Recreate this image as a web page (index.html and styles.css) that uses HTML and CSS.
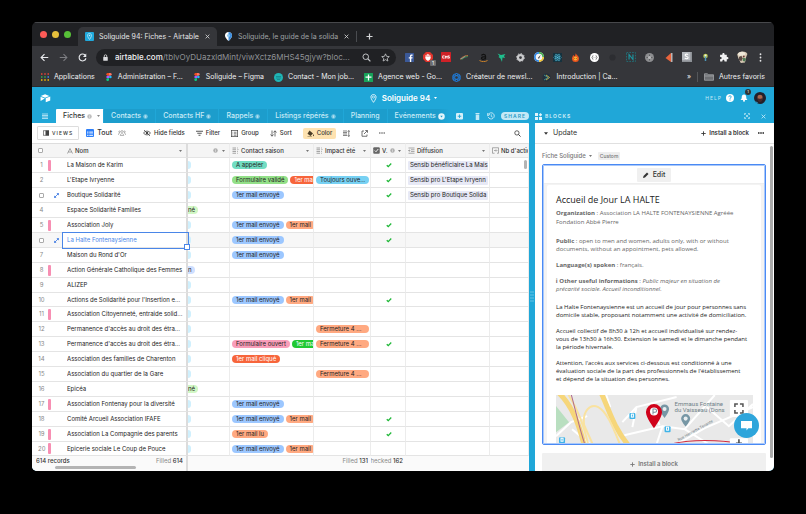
FILE: index.html
```html
<!DOCTYPE html>
<html lang="fr">
<head>
	<meta charset="UTF-8">
	<title>Soliguide 94: Fiches - Airtable</title>
	<link rel="stylesheet" href="styles.css">
</head>
<body>

	<!-- icons used more than once -->
	<svg class="sprite">
		<symbol id="i-info" viewBox="0 0 10 10"><circle cx="5" cy="5" r="4.5" fill="currentColor" opacity=".55"/><path d="M5 4.4v3M5 2.4v1" stroke="#fff" stroke-width="1.1"/></symbol>
		<symbol id="i-pin" viewBox="0 0 10 14"><path d="M5 .8C2.6.8 1 2.500 1 4.800c0 3 4 8.200 4 8.200s4-5.200 4-8.200C9 2.500 7.400.8 5 .8z" fill="none" stroke="currentColor" stroke-width="1.3"/><circle cx="5" cy="4.800" r="1.700" fill="none" stroke="currentColor"/></symbol>
		<symbol id="i-figma" viewBox="0 0 8 12"><path d="M4 0H2a2 2 0 0 0 0 4h2z" fill="#f24e1e"/><path d="M4 0h2a2 2 0 0 1 0 4H4z" fill="#ff7262"/><path d="M4 4H2a2 2 0 0 0 0 4h2z" fill="#a259ff"/><circle cx="6" cy="6" r="2" fill="#1abcfe"/><path d="M4 8H2a2 2 0 1 0 2 2z" fill="#0acf83"/></symbol>
		<symbol id="i-x" viewBox="0 0 8 8"><path d="M1 1l6 6M7 1L1 7" stroke="currentColor" stroke-width="1.300"/></symbol>
		<symbol id="i-plus" viewBox="0 0 8 8"><path d="M4 .5v7M.5 4h7" stroke="currentColor" stroke-width="1.400"/></symbol>
		<symbol id="i-multi" viewBox="0 0 14 14"><path d="M1 2h7M1 5.500h7M1 9h7M1 12.500h7M10 2h1.500M10 5.500h1.500M10 9h1.500M10 12.500h1.500M12.500 4l.8 1" stroke="currentColor" stroke-width="1.300"/></symbol>
		<symbol id="i-search" viewBox="0 0 12 12"><circle cx="5" cy="5" r="3.700" fill="none" stroke="currentColor" stroke-width="1.300"/><path d="M7.700 7.700l3.500 3.500" stroke="currentColor" stroke-width="1.600"/></symbol>
		<symbol id="i-down" viewBox="0 0 6 4"><path d="M0 0h6L3 4z" fill="currentColor"/></symbol>
		<symbol id="i-expand" viewBox="0 0 10 10"><path d="M1 9l8-8" stroke="currentColor" stroke-width="1.500"/><path d="M5 .5h4.500V5zM.5 5v4.500H5z" fill="currentColor"/></symbol>
		<symbol id="i-check" viewBox="0 0 12 10"><path d="M1.500 5.500l3 2.700L10.500 2" fill="none" stroke="currentColor" stroke-width="2.600"/></symbol>
	</svg>

	<div id="window">
		<div class="tabStrip">
			<div class="lights"><span class="red"></span><span class="yellow"></span><span class="green"></span></div>
			<div class="chromeTab active">
				<svg class="s9" viewBox="0 0 18 18"><rect width="18" height="18" rx="2" fill="#20a9dc"/><path d="M9 3C6.500 3 5 4.800 5 7c0 3 4 8 4 8s4-5 4-8c0-2.200-1.500-4-4-4z" fill="none" stroke="#c8ecfa" stroke-width="1.500"/><circle cx="9" cy="7" r="1.500" fill="#c8ecfa"/></svg>
				<span>Soliguide 94: Fiches - Airtable</span>
				<button class="plain" aria-label="Fermer"><svg class="s5"><use href="#i-x"/></svg></button>
			</div>
			<div class="chromeTab">
				<svg class="s9" viewBox="0 0 18 18"><path d="M9 0C5 0 2 3 2 7c0 5 7 11 7 11s7-6 7-11c0-4-3-7-7-7z" fill="#fff"/><path d="M9 0c4 0 7 3 7 7 0 5-7 11-7 11z" fill="#3d8fe0"/><circle cx="9" cy="7" r="3" fill="#8ccaf5"/></svg>
				<span>Soliguide, le guide de la solida</span>
				<button class="plain" aria-label="Fermer"><svg class="s5"><use href="#i-x"/></svg></button>
			</div>
			<button class="plain newTab" aria-label="Nouvel onglet"><svg class="s7"><use href="#i-plus"/></svg></button>
		</div>

		<div class="navBar">
			<div class="navButtons">
				<button class="plain" aria-label="Retour"><svg class="s9" viewBox="0 0 12 12"><path d="M11 6H2M6 1.500L1.500 6 6 10.500" fill="none" stroke="#e8eaed" stroke-width="1.500"/></svg></button>
				<button class="plain" aria-label="Suivant"><svg class="s9" viewBox="0 0 12 12"><path d="M1 6h9M6 1.500L10.500 6 6 10.500" fill="none" stroke="#7d7e82" stroke-width="1.400"/></svg></button>
				<button class="plain" aria-label="Actualiser"><svg class="s9" viewBox="0 0 12 12"><path d="M10 3.500A4.600 4.600 0 1 0 10.600 7" fill="none" stroke="#e8eaed" stroke-width="1.500"/><path d="M11 .8v4.400H6.600z" fill="#e8eaed"/></svg></button>
			</div>
			<div class="urlBar">
				<svg class="s7" viewBox="0 0 12 14"><rect x="1.500" y="6" width="9" height="7.500" rx="1" fill="#dcdde0"/><path d="M3.500 6V4a2.500 2.500 0 0 1 5 0v2" fill="none" stroke="#dcdde0" stroke-width="1.600"/></svg>
				<span class="url"><b>airtable.com</b>/tblvOyDUazxldMint/viwXctz6MHS45gjyw?bloc...</span>
				<svg class="s9"><use href="#i-search"/></svg>
				<svg class="s9" viewBox="0 0 14 14"><path d="M7 1.300l1.700 3.900 4.200.4-3.200 2.800 1 4.100L7 10.300l-3.700 2.200 1-4.100L1.100 5.600l4.200-.4z" fill="none" stroke="currentColor" stroke-width="1.300"/></svg>
			</div>
			<div class="extensions">
				<span><svg class="s9" viewBox="0 0 18 18"><rect width="18" height="18" rx="1" fill="#3b5998"/><path d="M12.500 18v-7h2.300l.4-2.700h-2.700V6.700c0-.8.3-1.300 1.400-1.300h1.300V3c-3.600-.6-5.400.7-5.400 3.300v2H7.500V11h2.300v7z" fill="#fff"/></svg></span>
				<span class="blocker"><svg class="s10" viewBox="0 0 18 18"><path d="M5.300 0h7.400L18 5.300v7.400L12.700 18H5.300L0 12.700V5.300z" fill="#e0332b"/><path d="M5.500 9V5.500M7.800 8V3.500M10.200 8V4M12.500 9V5.500M5 9h8c0 4-1.500 6-4 6s-4-2-4-6z" stroke="#fff" stroke-width="1.600" fill="#fff"/></svg><i>1</i></span>
				<span><svg class="s10" viewBox="0 0 18 18"><rect width="18" height="18" rx="1" fill="#cf2127"/><path d="M6.500 7H3v4h3.500M8 11.800V7l1.500 2.500L11 7v4.800M15.500 7h-2.800v2h2.500v2h-2.800" stroke="#fff" stroke-width="1.500" fill="none"/></svg></span>
				<span><svg class="s9" viewBox="0 0 18 18"><path d="M1 13c3-6 8-7 15-8" fill="none" stroke="#e8833a" stroke-width="1.500"/><path d="M3 14c3-5 7-6 13-7" fill="none" stroke="#3fa55b" stroke-width="1.500"/><path d="M1 11l5-1 5-4" stroke="#b9c4ca" stroke-width="1.200" fill="none"/></svg></span>
				<span><svg class="s9" viewBox="0 0 18 18"><path d="M5 5c1-3 8-3 8 1v7M13 7c-4 0-8 .5-8 3.500s5.500 3 8-.5" fill="none" stroke="#111" stroke-width="2.500"/><path d="M1 15c5 3 11 3 16 0" fill="none" stroke="#e08c28" stroke-width="1.700"/></svg></span>
				<span><svg class="s9" viewBox="0 0 18 18"><path d="M1 1l7 3 9-2-3 4 2 4-5-1-1 9-3-7-4-3 2-2z" fill="#1fbf8d"/></svg></span>
				<span><svg class="s9" viewBox="0 0 18 18"><circle cx="9" cy="9" r="5" fill="none" stroke="#c9cacc" stroke-width="4.500"/><circle cx="9" cy="9" r="7.800" fill="none" stroke="#c9cacc" stroke-width="2" stroke-dasharray="3 3"/></svg></span>
				<span><svg class="s10" viewBox="0 0 18 18"><circle cx="9" cy="9" r="9" fill="#f5f5f5"/><path d="M9 1.500A7.500 7.500 0 0 1 16.500 9" fill="none" stroke="#46b14f" stroke-width="3"/><path d="M16.500 9A7.500 7.500 0 0 1 9 16.500" fill="none" stroke="#f4c430" stroke-width="3"/><path d="M9 16.500A7.500 7.500 0 0 1 9 1.500" fill="none" stroke="#2f86e5" stroke-width="3"/><path d="M7 11l5-6-3 7z" fill="#333"/></svg></span>
				<span><svg class="s9" viewBox="0 0 18 18"><rect width="18" height="18" fill="#15323e"/><g fill="none" stroke="#57c7e6" stroke-width="1"><ellipse cx="9" cy="9" rx="7.500" ry="3"/><ellipse cx="9" cy="9" rx="7.500" ry="3" transform="rotate(60 9 9)"/><ellipse cx="9" cy="9" rx="7.500" ry="3" transform="rotate(120 9 9)"/></g><circle cx="9" cy="9" r="1.500" fill="#57c7e6"/></svg></span>
				<span><svg class="s9" viewBox="0 0 18 18"><path d="M9 0c1 4 7 5 7 11a7 7 0 0 1-14 0c0-3 2-4 2-7 2 1 3 2 3 3 2-2 2-4 2-7z" fill="#e8541f"/><circle cx="9" cy="11" r="3.800" fill="#f9b233"/><path d="M7 11h1.200M10 11h1.200" stroke="#7d2b10" stroke-width="1.800"/></svg></span>
				<span><svg class="s9" viewBox="0 0 18 18"><circle cx="9" cy="9" r="9" fill="#fff"/><path d="M6.500 5C4.500 5 6 8 4 9c2 1 .5 4 2.500 4M11.500 5c2 0 .5 3 2.500 4-2 1-.5 4-2.500 4M7.500 9h.8M9.800 9h.8" fill="none" stroke="#444" stroke-width="1.400"/></svg></span>
				<span><svg class="s7" viewBox="0 0 18 18"><circle cx="9" cy="9" r="8" fill="#2c2d31"/></svg></span>
				<span><svg class="s10" viewBox="0 0 18 18"><rect x="1" y="1" width="16" height="16" fill="none" stroke="#1d7c86" stroke-width="1.400" stroke-dasharray="3 2"/><path d="M5.500 13.500v-9l7 9v-9" fill="none" stroke="#1c98a3" stroke-width="2"/></svg></span>
				<span><svg class="s9" viewBox="0 0 18 18"><circle cx="9" cy="9" r="9" fill="#8d8e90"/><path d="M9 3v12M3 9h12" stroke="#4c4d50" stroke-width="1.500"/><circle cx="9" cy="9" r="3" fill="#b7b8ba"/></svg></span>
				<span><svg class="s9" viewBox="0 0 18 18"><path d="M14 0v18L3 10z" fill="#e8643c"/><path d="M14 0h3v18h-3z" fill="#b9b4b4"/></svg></span>
				<span><svg class="s10" viewBox="0 0 18 18"><rect width="18" height="18" fill="#8d9196"/><rect width="15" height="15" fill="#b6babf"/><path d="M11 4.500c-3-1.500-6 0-5 2s5 1 5 3.500-4 2.500-6 1" fill="none" stroke="#fff" stroke-width="2"/></svg></span>
				<span><svg class="s9" viewBox="0 0 18 18"><circle cx="9" cy="6" r="4.500" fill="#b9c94a"/><path d="M9 6v10" stroke="#4f97b8" stroke-width="3"/><circle cx="9" cy="5" r="2" fill="#eee"/></svg></span>
				<span><svg class="s10" viewBox="0 0 18 18"><path d="M2 5h4c-1-4 5-4 4 0h4v4c4-1 4 5 0 4v4h-4c0-4-4-4-4 0H2v-4c4 0 4-4 0-4z" fill="#f1f1f2"/></svg></span>
				<span><svg class="s12" viewBox="0 0 20 20"><path d="M2 6c2-6 14-7 17-1l-2 5-2 9-7 1-4-8z" fill="#d7c9b4"/><path d="M3 5c3-5 11-5 13 0l-3 3H5z" fill="#efe8da"/><path d="M5 10l4-2 2 4-2 5-4-2z" fill="#5b4a44"/><path d="M12 11l5 2-3 5-3-2z" fill="#4d7a54"/><circle cx="13" cy="9" r="1.500" fill="#6a3830"/></svg></span>
				<span><svg class="s9" viewBox="0 0 18 18"><g fill="#e4e5e7"><circle cx="9" cy="2.500" r="1.800"/><circle cx="9" cy="9" r="1.800"/><circle cx="9" cy="15.500" r="1.800"/></g></svg></span>
			</div>
		</div>

		<nav class="bookmarks">
			<a href="#"><svg class="s8" viewBox="0 0 16 16"><g stroke-width="3" stroke-dasharray="3 3.500"><path d="M0 2h16" stroke="#ea4335"/><path d="M0 8h10" stroke="#34a853"/><path d="M13 8h3" stroke="#4285f4"/><path d="M0 14h16" stroke="#fbbc05"/></g></svg>Applications</a>
			<a href="#"><svg class="s8"><use href="#i-figma"/></svg>Administration – F...</a>
			<a href="#"><svg class="s8"><use href="#i-figma"/></svg>Soliguide – Figma</a>
			<a href="#"><svg class="s9" viewBox="0 0 18 18"><circle cx="9" cy="9" r="9" fill="#1fb5b5"/><path d="M4 7h10M4 10h10M6 13h6" stroke="#117d85" stroke-width="1.400"/></svg>Contact - Mon job...</a>
			<a href="#"><svg class="s9" viewBox="0 0 18 18"><rect width="18" height="18" rx="1" fill="#17a35a"/><path d="M9 3v12M3 8h12" stroke="#fff" stroke-width="2.500"/></svg>Agence web - Go...</a>
			<a href="#"><svg class="s9" viewBox="0 0 18 18"><g fill="none" stroke="#1f7fe0" stroke-width="1.500"><circle cx="9" cy="9" r="8"/><ellipse cx="9" cy="9" rx="8" ry="3.500" transform="rotate(30 9 9)"/><ellipse cx="9" cy="9" rx="8" ry="3.500" transform="rotate(90 9 9)"/><ellipse cx="9" cy="9" rx="8" ry="3.500" transform="rotate(150 9 9)"/></g></svg>Créateur de newsl...</a>
			<a href="#"><svg class="s9" viewBox="0 0 18 18"><circle cx="9" cy="9" r="8" fill="#23313f"/><path d="M4 4l8 5-8 5" fill="none" stroke="#4aa3a0" stroke-width="1.600"/><path d="M8 4l7 5-7 5" fill="none" stroke="#e2c94c" stroke-width="1.600"/></svg>Introduction | Ca...</a>
			<span class="more">»</span>
			<a href="#" class="others"><svg class="s10" viewBox="0 0 20 16"><path d="M1 14.500V1.500h6l2 2h10v11zM1 6h18" fill="#6d6f73" stroke="#a6a8ab" stroke-width="1.500"/></svg>Autres favoris</a>
		</nav>

		<div class="app">
			<header class="baseHeader">
				<svg class="logo" viewBox="0 0 24 20"><path d="M11 .5L1.500 4.300l9.600 4 9.500-4z" fill="#fff"/><path d="M12.500 9.500v9l10-4V5.600z" fill="#fff"/><path d="M10.500 10L1 6v9.500z" fill="#fff"/></svg>
				<h1><svg class="s9"><use href="#i-pin"/></svg>Soliguide 94<svg class="caret"><use href="#i-down"/></svg></h1>
				<div class="account">
					<span class="help">HELP</span>
					<svg class="s8" viewBox="0 0 16 16"><circle cx="8" cy="8" r="8" fill="#fff"/><path d="M5.500 6.300c0-3.500 5-3.300 5-.5C10.500 7.500 8 7.500 8 9.500M8 11v2" fill="none" stroke="#20a7d8" stroke-width="1.900"/></svg>
					<span class="bell"><svg class="s8" viewBox="0 0 16 16"><path d="M8 1c-3 0-4.500 2-4.500 5S3 10 1 12h14c-2-2-2.500-3-2.500-6S11 1 8 1z" fill="#fff"/><circle cx="8" cy="13.500" r="2" fill="#fff"/></svg><i>1</i></span>
					<svg class="s12" viewBox="0 0 24 24"><circle cx="12" cy="12" r="12" fill="#23202a"/><path d="M7 10c0-6 10-6 10 0s-2 8-5 8-5-3-5-8z" fill="#a9674e"/><path d="M7 12c2 2 8 2 10 0 0 6-2 8-5 8s-5-3-5-8z" fill="#47292a"/><path d="M2 18l6 3-2 2z" fill="#2f9ccc"/></svg>
				</div>
			</header>

			<div class="tableTabs">
				<svg class="menu" viewBox="0 0 12 12"><path d="M0 2h12M0 5h12M0 8h12M0 11h12" stroke="#b6e3f4" stroke-width="1.800"/></svg>
				<a href="#" class="active">Fiches <svg class="s5"><use href="#i-info"/></svg><svg class="caret"><use href="#i-down"/></svg></a>
				<a href="#">Contacts <svg class="s5"><use href="#i-info"/></svg></a>
				<a href="#">Contacts HF <svg class="s5"><use href="#i-info"/></svg></a>
				<a href="#">Rappels <svg class="s5"><use href="#i-info"/></svg></a>
				<a href="#">Listings répérés <svg class="s5"><use href="#i-info"/></svg></a>
				<a href="#">Planning</a>
				<a href="#" class="last">Evénements</a>
				<div class="tabTools">
					<svg class="s7" viewBox="0 0 14 14"><circle cx="7" cy="7" r="6.500" fill="#e3f5fb"/><path d="M4.500 5.500h5L7 9z" fill="#1b9dcb"/></svg>
					<svg class="s7 add" viewBox="0 0 14 14"><rect width="14" height="13" rx="2" fill="#d6f0f9"/><path d="M7 3v7M3.500 6.500h7" stroke="#20a7d8" stroke-width="1.800"/></svg>
					<svg class="s7" viewBox="0 0 14 14"><path d="M3 0h8v2H3zM3.500 3h7v11h-7z" fill="#c4e9f6"/></svg>
					<svg class="s8" viewBox="0 0 16 16"><path d="M3 4.500A6.200 6.200 0 1 1 2.500 10" fill="none" stroke="#d6f0f9" stroke-width="1.700"/><path d="M.5 3l1 5 4-3zM8.500 4.500V9l3 1.500" fill="none" stroke="#d6f0f9" stroke-width="1.500"/></svg>
					<button class="share">SHARE</button>
				</div>
				<div class="blocksTitle">
					<svg class="s7" viewBox="0 0 14 14"><path d="M0 0h6v6H0zM0 8h6v6H0zM8 8h6v6H8zM11 0l3.500 3.500L11 7 7.500 3.500z" fill="#e3f5fb"/></svg>
					<span>BLOCKS</span>
					<svg class="s6 full" viewBox="0 0 12 12"><path d="M1 4V1h3M8 1h3v3M11 8v3H8M4 11H1V8M3 3l6 6M9 3L3 9" fill="none" stroke="#d6f0f9" stroke-width="1.300"/></svg>
					<svg class="s5"><use href="#i-x"/></svg>
				</div>
			</div>

			<div class="main">
				<section class="gridPane">
					<div class="viewBar">
						<button class="views"><svg class="s6" viewBox="0 0 12 10"><rect x=".6" y=".6" width="10.800" height="8.800" fill="none" stroke="#444" stroke-width="1.200"/><path d="M5 0h7v10H5z" fill="#444"/></svg>VIEWS</button>
						<button class="viewName"><svg class="s8" viewBox="0 0 16 16"><rect width="16" height="16" rx="2" fill="#2d7ff9"/><path d="M2 5h3v2.500H2zM6.500 5H14v2.500H6.500zM2 9h3v1.500H2zM6.500 9H14v1.500H6.500zM2 12h3v2H2zM6.500 12H14v2H6.500z" fill="#cfe2ff"/></svg>Tout</button>
						<svg class="s8 people" viewBox="0 0 16 14"><g fill="none" stroke="#888" stroke-width="1.200"><circle cx="8" cy="4" r="2"/><circle cx="3" cy="4.500" r="1.500"/><circle cx="13" cy="4.500" r="1.500"/><path d="M4.500 12c0-5 7-5 7 0zM.6 11c0-3 1.500-4 3-3.500M15.400 11c0-3-1.500-4-3-3.500"/></g></svg>
						<button class="hide"><svg class="s8" viewBox="0 0 16 14"><path d="M1 7c3-5 11-5 14 0-3 5-11 5-14 0zM2 1l12 12" fill="none" stroke="#444" stroke-width="1.500"/><circle cx="8" cy="7" r="2.500" fill="#444"/></svg>Hide fields</button>
						<button><svg class="s7" viewBox="0 0 14 12"><path d="M0 1.500h14M2.500 5.500h9M5 9.500h4" stroke="#444" stroke-width="1.800"/></svg>Filter</button>
						<button><svg class="s7" viewBox="0 0 14 14"><rect x=".7" y=".7" width="12.600" height="12.600" fill="none" stroke="#444" stroke-width="1.400"/><path d="M3 4.500h1.500M6 4.500h5M3 7.500h1.500M6 7.500h5M3 10.500h1.500M6 10.500h5" stroke="#444" stroke-width="1.300"/></svg>Group</button>
						<button><svg class="s7" viewBox="0 0 14 14"><path d="M4 1v11M1 9l3 3.500L7 9M10 13V2M7 5l3-3.500L13 5" fill="none" stroke="#444" stroke-width="1.500"/></svg>Sort</button>
						<button class="color"><svg class="s7" viewBox="0 0 14 14"><path d="M5 1l7 6-5 5-6-4.500z" fill="#4a3c26"/><path d="M13 8c1.500 3 1 4.500 0 4.500S11.500 11 13 8z" fill="#4a3c26"/><path d="M1 13.500h9" stroke="#4a3c26"/></svg>Color</button>
						<button aria-label="Row height"><svg class="s7" viewBox="0 0 14 14"><path d="M0 2h8M0 5h8M0 8h8M0 11h8M11.500 1v12M9.500 3.500l2-2.500 2 2.500M9.500 10.500l2 2.500 2-2.500" fill="none" stroke="#555" stroke-width="1.400"/></svg></button>
						<button aria-label="Share view"><svg class="s7" viewBox="0 0 14 14"><path d="M6 2H2v10.500h10V9M8.500 1H13v4.500M12.500 1.500L6 8" fill="none" stroke="#444" stroke-width="1.500"/></svg></button>
						<button aria-label="More"><svg class="s6" viewBox="0 0 12 12"><path d="M0 6h3M4.500 6h3M9 6h3" stroke="#444" stroke-width="2"/></svg></button>
						<svg class="s7 search"><use href="#i-search"/></svg>
					</div>

					<table class="grid">
						<colgroup><col class="cNum"><col class="cNom"><col class="cInfo"><col class="cContact"><col class="cImpact"><col class="cValid"><col class="cDiffusion"><col></colgroup>
						<thead>
							<tr>
								<th><input type="checkbox" aria-label="Tout sélectionner"></th>
								<th class="frozen"><div><svg class="s6" viewBox="0 0 12 12"><path d="M1 11L6 1l5 10M3 8h6" fill="none" stroke="currentColor" stroke-width="1.300"/></svg>Nom<svg class="caret"><use href="#i-down"/></svg></div></th>
								<th><div class="end"><svg class="s5"><use href="#i-info"/></svg><svg class="caret"><use href="#i-down"/></svg></div></th>
								<th><div><svg class="s7"><use href="#i-multi"/></svg>Contact saison<svg class="caret"><use href="#i-down"/></svg></div></th>
								<th><div><svg class="s7"><use href="#i-multi"/></svg>Impact été<svg class="caret"><use href="#i-down"/></svg></div></th>
								<th><div><svg class="s7" viewBox="0 0 14 14"><rect x=".5" y=".5" width="13" height="13" rx="2" fill="#666"/><path d="M3.500 7l2.500 2.500L10.500 4" fill="none" stroke="#fff" stroke-width="1.800"/></svg>V.<svg class="s5"><use href="#i-info"/></svg><svg class="caret"><use href="#i-down"/></svg></div></th>
								<th><div><svg class="s7" viewBox="0 0 14 14"><path d="M1 2h12M6 5.500h7M6 9h7M1 12.500h12M0 7.200h4M2.500 5.500l2 1.700-2 1.700" fill="none" stroke="currentColor" stroke-width="1.200"/></svg>Diffusion<svg class="caret"><use href="#i-down"/></svg></div></th>
								<th><div><svg class="s7" viewBox="0 0 14 14"><path d="M5 12.500H1v-11h12v11h-3M4 7h5M8 5l2 2-2 2" fill="none" stroke="currentColor" stroke-width="1.200"/></svg>Nb d'actio</div></th>
							</tr>
						</thead>
						<tbody></tbody>
						<tfoot>
							<tr>
								<td colspan="2" class="frozen"><div><b>614 records</b><span class="filled">Filled <b>614</b></span></div></td>
								<td colspan="2"></td>
								<td><div class="end"><span>Filled <b>131</b></span></div></td>
								<td><div class="end"><span>hecked <b>162</b></span></div></td>
								<td></td>
								<td></td>
							</tr>
						</tfoot>
					</table>
					<div class="hScroll"></div>
					<div class="vScroll"></div>
				</section>

				<div class="divider"><svg viewBox="0 0 4 12"><path d="M.5 1h3M.5 4h3M.5 7h3M.5 10h3" stroke="#a9def0" stroke-dasharray="1 1"/></svg></div>

				<aside class="blocks">
					<div class="blockBar">
						<svg class="caret"><use href="#i-down"/></svg>
						<span class="blockName">Update</span>
						<button><svg class="s5"><use href="#i-plus"/></svg>Install a block</button>
						<button aria-label="More"><svg class="s6" viewBox="0 0 12 12"><path d="M0 6h3M4.500 6h3M9 6h3" stroke="#222" stroke-width="3"/></svg></button>
					</div>
					<div class="blockBody">
						<div class="blockLabel">Fiche Soliguide <svg class="caret"><use href="#i-down"/></svg><span>Custom</span></div>
						<div class="card">
							<div class="editBar"><button><svg class="s6" viewBox="0 0 12 12"><path d="M0 12l1-4 7-7 3 3-7 7z" fill="#333"/></svg>Edit</button></div>
							<article>
								<h2>Accueil de Jour LA HALTE</h2>
								<p class="org"><b>Organization</b> : Association LA HALTE FONTENAYSIENNE Agréée<br>Fondation Abbé Pierre</p>
								<p><b>Public</b> : open to men and women, adults only, with or without<br>documents, without an appointment, pets allowed.</p>
								<p><b>Language(s) spoken</b> : français.</p>
								<p><b>ℹ Other useful informations</b> : <em>Public majeur en situation de<br>précarité sociale. Accueil inconditionnel.</em></p>
								<div class="description">
									<p>La Halte Fontenaysienne est un accueil de jour pour personnes sans<br>domicile stable, proposant notamment une activité de domiciliation.</p>
									<p>Accueil collectif de 8h30 à 12h et accueil individualisé sur rendez-<br>vous de 13h30 à 16h30. Extension le samedi et le dimanche pendant<br>la période hivernale.</p>
									<p>Attention, l'accès aux services ci-dessous est conditionné à une<br>évaluation sociale de la part des professionnels de l'établissement<br>et dépend de la situation des personnes.</p>
								</div>
								<svg class="map" viewBox="0 0 196 49" preserveAspectRatio="xMidYMin slice">
									<rect width="196" height="49" fill="#e9e9e9"/>
									<path d="M0 11l13 16-13 10z" fill="#b9dfc0"/>
									<g fill="none" stroke="#fff" stroke-width="2">
										<path d="M0 41l15-14 16-6M66 27l14-15 40-10M68 40l38-9 22 3 30-34M80 12l-4 20M106 31l-6 18M50 0l4 12M128 34l24 15M150 12l22 19 24-22M120 49l28-16 48-21M95 8l8 22M16 34l18 15"/>
									</g>
									<g fill="none" stroke="#f6d67a" stroke-width="5">
										<path d="M3-2c14 14 20 32 25 52M45-2c8 17 12 34 27 52"/>
									</g>
									<g fill="none" stroke="#f9e2a0" stroke-width="2">
										<path d="M12-1c9 14 16 32 20 50M28 30c-2-14 6-22 14-18s14 18 22 38M28 30l9 20"/>
									</g>
									<path d="M15-1c4 14 8 34 14 51" fill="none" stroke="#b06a8c"/>
									<path d="M113 49c20-5 50-5 75 0" fill="none" stroke="#d1283c"/>
									<g fill="#3fb4e8"><rect x="73" y="18" width="6" height="6" rx="1"/><rect x="108" y="31" width="6" height="6" rx="1"/><rect x="3" y="42" width="6" height="6" rx="1"/></g>
									<g fill="none" stroke="#fff"><rect x="75" y="19" width="2" height="3"/><rect x="110" y="32" width="2" height="3"/><rect x="5" y="43" width="2" height="3"/></g>
									<path d="M108 9.500a4.500 4.500 0 0 0-4.500 4.500c0 3 4.500 9 4.500 9s4.500-6 4.500-9a4.500 4.500 0 0 0-4.500-4.500zM129 19a4.500 4.500 0 0 0-4.500 4.500c0 3 4.500 8 4.500 8s4.500-5 4.500-8a4.500 4.500 0 0 0-4.500-4.500z" fill="#7797a5"/>
									<circle cx="108" cy="14" r="2" fill="#e9eef0"/><circle cx="129" cy="23.500" r="2" fill="#e9eef0"/>
									<path d="M97.500 9a8 8 0 0 0-8 8c0 6 8 16 8 16s8-10 8-16a8 8 0 0 0-8-8z" fill="#d0021b"/>
									<circle cx="97.500" cy="16.500" r="4" fill="#fff"/><path d="M96.500 19.500v-5.500h2a1.600 1.600 0 0 1 0 3.200h-2" fill="none" stroke="#7d8fa0"/>
									<text x="118" y="11">Emmaus Fontaine</text>
									<text x="118" y="17">du Vaisseau (Dons</text>
									<text x="122" y="46" class="street" transform="rotate(-29 122 46)">Rue Henriette Tenante</text>
									<rect x="173" y="5" width="18" height="17" rx="1" fill="#fff"/>
									<path d="M178 12v-3h3M183 9h3v3M186 15v3h-3M181 18h-3v-3" fill="none" stroke="#555" stroke-width="1.500"/>
									<rect x="173" y="43" width="18" height="8" rx="1" fill="#fff"/>
									<path d="M182 44v6M179 48h6" stroke="#444" stroke-width="1.500"/>
								</svg>
							</article>
						</div>
						<button class="install"><svg class="s5"><use href="#i-plus"/></svg>Install a block</button>
					</div>
					<div class="blockScroll"></div>
					<button class="chat" aria-label="Chat"><svg viewBox="0 0 14 12"><path d="M1 1h12v8H9l-2 2.500V9H1z" fill="#fff"/></svg></button>
				</aside>
			</div>
		</div>
	</div>

	<script src="script.js"></script>
</body>
</html>
```
FILE: styles.css
```css
* {
	box-sizing: border-box;
}
body {
	margin: 0;
	padding: 22px 32px 43px;
	background: #000;
	font: 6px/8px Inter, "Liberation Sans", sans-serif;
	color: #333;
}
button {
	display: flex;
	align-items: center;
	gap: 3px;
	padding: 0;
	border: 0;
	background: none;
	font: inherit;
	color: inherit;
	white-space: nowrap;
}
a {
	color: inherit;
	text-decoration: none;
}
svg {
	display: block;
	flex: none;
}
input[type=checkbox] {
	appearance: none;
	display: block;
	width: 5px;
	height: 5px;
	margin: 0;
	border: 1px solid #aaa;
	border-radius: 1px;
	background: #fff;
}
.sprite { position: absolute; width: 0; height: 0; }
.s5 { width: 5px; height: 5px; }
.s6 { width: 6px; height: 6px; }
.s7 { width: 7px; height: 7px; }
.s8 { width: 8px; height: 8px; }
.s9 { width: 9px; height: 9px; }
.s10 { width: 10px; height: 10px; }
.s12 { width: 12px; height: 12px; }
.caret { width: 3px; height: 2px; }

#window {
	overflow: hidden;
	border-radius: 5px;
	background: #202124;
}

/********** browser **********/
.tabStrip {
	display: flex;
	align-items: flex-end;
	height: 24px;
	border-top: 1px solid #47484b;
	color: #9fa1a5;
}
.lights {
	display: flex;
	align-self: center;
	gap: 5px;
	width: 46px;
	padding-left: 8px;
}
.lights span {
	width: 7px;
	height: 7px;
	border-radius: 50%;
}
.red { background: #fc5b57; }
.yellow { background: #e5bf3c; }
.green { background: #57c038; }
.chromeTab {
	display: flex;
	align-items: center;
	gap: 5px;
	width: 139px;
	height: 19px;
	padding: 0 7px;
	border-radius: 5px 5px 0 0;
	font-size: 7px;
}
.chromeTab span {
	flex: 1;
	overflow: hidden;
	white-space: nowrap;
}
.chromeTab button { color: #d5d6d8; }
.chromeTab.active {
	background: #35363a;
	color: #e4e5e7;
}
.newTab {
	height: 11px;
	margin-bottom: 4px;
	padding-left: 9px;
	border-left: 1px solid #4a4c50;
	color: #d5d6d8;
}
.navBar {
	display: flex;
	align-items: center;
	height: 22px;
	background: #35363a;
}
.navButtons {
	display: flex;
	gap: 10px;
	width: 64px;
	padding-left: 8px;
}
.urlBar {
	display: flex;
	flex: 1;
	align-items: center;
	gap: 10px;
	min-width: 0;
	height: 17px;
	padding: 0 6px;
	border-radius: 9px;
	background: #202124;
	color: #c4c6c9;
}
.url {
	flex: 1;
	overflow: hidden;
	margin-left: -4px;
	font-size: 8px;
	line-height: 10px;
	white-space: nowrap;
	color: #8f9195;
}
.url b {
	font-weight: 500;
	color: #f0f0f1;
}
.extensions {
	display: flex;
	width: 378px;
	padding: 0 4px;
}
.extensions span {
	display: flex;
	flex: 1;
	position: relative;
	align-items: center;
	justify-content: center;
}
.blocker i {
	position: absolute;
	right: 1px;
	bottom: -3px;
	width: 6px;
	border-radius: 1px;
	background: #6b6c6f;
	color: #fff;
	font-style: normal;
	font-size: 5px;
	line-height: 6px;
	text-align: center;
}
.bookmarks {
	display: flex;
	align-items: center;
	gap: 10px;
	height: 19px;
	padding: 0 9px;
	border-bottom: 1px solid #2a2b2e;
	background: #35363a;
	color: #eeeff0;
	font-size: 7px;
	white-space: nowrap;
}
.bookmarks a {
	display: flex;
	align-items: center;
	gap: 5px;
}
.more { margin-left: auto; }
.bookmarks .others {
	margin-left: -4px;
	padding-left: 6px;
	border-left: 1px solid #55575a;
}

/********** base header **********/
.app { background: #20a7d8; }
.baseHeader {
	display: grid;
	grid-template-columns: 1fr auto 1fr;
	align-items: center;
	height: 22px;
	padding: 0 8px;
	color: #fff;
}
.logo {
	width: 11px;
	height: 9px;
}
.baseHeader h1 {
	display: flex;
	align-items: center;
	gap: 4px;
	margin: 0;
	font-size: 8px;
	font-weight: 600;
}
.account {
	display: flex;
	align-items: center;
	justify-content: flex-end;
	gap: 6px;
}
.help {
	margin-right: -2px;
	font-size: 5px;
	letter-spacing: 1px;
	color: #c4e9f6;
}
.bell { position: relative; }
.bell i {
	position: absolute;
	top: -5px;
	right: -3px;
	width: 6px;
	border-radius: 3px;
	background: #333;
	font-style: normal;
	font-size: 4px;
	line-height: 6px;
	text-align: center;
}
.tableTabs {
	display: flex;
	align-items: stretch;
	height: 14px;
	color: #c9ebf7;
	font-weight: 500;
}
.menu {
	align-self: center;
	width: 6px;
	height: 6px;
	margin: 0 8px 0 10px;
}
.tableTabs a {
	display: flex;
	align-items: center;
	gap: 2px;
	padding: 0 7px;
	border-right: 1px solid #20a7d8;
	background: #1c9dcc;
	font-size: 7px;
	white-space: nowrap;
}
.tableTabs a.active {
	padding-right: 3px;
	border-radius: 1px 1px 0 0;
	background: #fff;
	color: #333;
}
.tableTabs a.last {
	padding-right: 2px;
	border-right: 0;
}
.tableTabs .active svg { color: #888; }
.tableTabs .active .caret { margin-left: 3px; }
.tabTools {
	display: flex;
	flex: 1;
	align-items: center;
	gap: 6px;
	padding-right: 6px;
	background: linear-gradient(to right, #1c9dcc, #20a7d8 12px);
}
.add { margin: 0 auto; }
.share {
	height: 8px;
	padding: 0 3px;
	border-radius: 4px;
	background: #c4e9f6;
	color: #2b9cc6;
	font-size: 5px;
	font-weight: 600;
	letter-spacing: 1px;
}
.blocksTitle {
	display: flex;
	align-items: center;
	gap: 3px;
	width: 239px;
	padding-right: 8px;
	font-size: 5px;
	font-weight: 700;
	letter-spacing: 1px;
}
.full { margin: 0 8px 0 auto; }

/********** grid **********/
.main {
	display: flex;
	align-items: stretch;
}
.gridPane {
	position: relative;
	flex: 1;
	min-width: 0;
	border-radius: 0 1px 0 0;
	background: #fff;
}
.viewBar {
	display: flex;
	align-items: center;
	gap: 11px;
	height: 20px;
	padding: 0 8px 0 5px;
	font-weight: 500;
}
.views {
	height: 14px;
	padding: 0 5px;
	border: 1px solid #ddd;
	border-radius: 1px;
	font-size: 5px;
	letter-spacing: 1px;
}
.viewName {
	margin-left: -4px;
	font-size: 7px;
}
.people { margin-left: -5px; }
.hide { margin-left: 6px; }
.color {
	height: 11px;
	margin-right: -4px;
	padding: 0 4px;
	border-radius: 2px;
	background: #fee2b0;
}
.search { margin-left: auto; }
.grid {
	width: 100%;
	border-spacing: 0;
	table-layout: fixed;
}
.cNum { width: 31px; }
.cNom { width: 125px; }
.cInfo { width: 42px; }
.cContact, .cDiffusion { width: 84px; }
.cImpact { width: 57px; }
.cValid { width: 35px; }
.grid th, .grid td {
	height: 15px;
	padding: 0 0 0 2px;
	border-bottom: 1px solid #e4e4e4;
	font-weight: 400;
	text-align: left;
	white-space: nowrap;
}
.grid tbody td { color: #222; }
.grid tbody tr:nth-child(10n) td { height: 14px; }
.grid th + th, .grid td + td { border-right: 1px solid #ececec; }
.grid th {
	border-top: 1px solid #ddd;
	background: #f5f5f5;
	font-weight: 500;
}
.grid th > div, .grid td > div {
	display: flex;
	align-items: center;
	gap: 2px;
	overflow: hidden;
}
.grid tbody td > div { height: 12px; }
.grid th svg { color: #777; }
.grid th .caret { margin: 0 4px 0 auto; }
.grid th .end .caret { margin-left: 2px; }
.end { justify-content: flex-end; }
.grid .frozen, .grid td.frozen {
	padding-left: 4px;
	border-right: 2px solid #dcdcdc;
}
.grid th:first-child, .grid td:first-child { padding-left: 6px; }
.grid tbody .num { color: #888; }
.num span {
	min-width: 7px;
	text-align: center;
}
.num input { margin: 0 1px; }
.num i {
	width: 3px;
	height: 11px;
	margin-left: auto;
	margin-right: 12px;
	border-radius: 1px;
	background: #f78fb3;
}
.num svg {
	margin-left: auto;
	margin-right: 4px;
	color: #2d6fe0;
}
.current td { background: #f7f7f7; }
.grid .current .frozen {
	position: relative;
	background: #fff;
	color: #4a86e8;
	outline: 1px solid #4a86e8;
}
.current .frozen::after {
	content: "";
	position: absolute;
	right: -4px;
	bottom: -3px;
	width: 4px;
	height: 4px;
	border: 1px solid #4a86e8;
	background: #fff;
}
.grid td.info { padding: 0; }
.cut {
	width: 3px;
	height: 8px;
	border-radius: 0 4px 4px 0;
	background: #d0f0fd;
}
.cut.wide {
	width: auto;
	padding-right: 3px;
}
.tag {
	flex: none;
	height: 8px;
	padding: 0 4px;
	border-radius: 4px;
}
.impact .tag { width: 53px; }
.teal { background: #72ddc3; }
.lime { background: #93e088; }
.blue { background: #9cc7ff; }
.salmon { background: #ffa981; }
.orange { background: #f7653b; color: #fff; }
.sky { background: #77d1f3; }
.pink { background: #f99db9; }
.kelly { background: #20c933; color: #fff; }
.paleGreen { background: #d1f7c4; }
.paleBlue { background: #cfdfff; }
.link {
	flex: 0 0 80px;
	overflow: hidden;
	height: 9px;
	padding-left: 2px;
	border-radius: 1px;
	background: #e7e9f6;
}
.valid svg {
	margin: 0 auto;
	color: #20b838;
}
.grid tfoot td {
	padding: 1px 3px 0 0;
	border: 0;
	background: #fafafa;
	vertical-align: top;
	color: #888;
}
.grid tfoot td.frozen { padding-left: 4px; }
.grid tfoot b {
	font-weight: 500;
	color: #333;
}
.filled { margin-left: auto; }
.hScroll {
	position: absolute;
	left: 23px;
	bottom: 2px;
	width: 81px;
	height: 3px;
	border-radius: 2px;
	background: #b4b4b4;
}
.vScroll {
	position: absolute;
	top: 37px;
	right: 2px;
	width: 3px;
	height: 9px;
	border-radius: 2px;
	background: #b4b4b4;
}

/********** blocks **********/
.divider {
	display: flex;
	align-items: center;
	width: 6px;
}
.divider svg {
	width: 4px;
	height: 12px;
	margin: 0 auto;
}
.blocks {
	position: relative;
	width: 239px;
	background: #fff;
}
.blockBar {
	display: flex;
	align-items: center;
	gap: 9px;
	height: 21px;
	padding: 0 10px 0 9px;
	border-bottom: 1px solid #e0e0e0;
	font-weight: 600;
}
.blockBar .caret { width: 4px; height: 3px; }
.blockName {
	margin-left: -4px;
	margin-right: auto;
	font-size: 7px;
	font-weight: 400;
}
.blockBody { padding: 8px 8px 0 7px; }
.blockLabel {
	display: flex;
	align-items: center;
	gap: 3px;
	margin-bottom: 4px;
	color: #777;
	font-weight: 500;
}
.blockLabel span {
	margin-left: 3px;
	padding: 0 2px;
	border-radius: 1px;
	background: #eee;
	font-size: 5px;
}
.card {
	border: 1px solid #4a8af4;
	outline: 1px solid #a9c8fa;
	outline-offset: -2px;
	border-radius: 2px;
	background: #f3f3f3;
}
.editBar {
	display: flex;
	justify-content: center;
	padding: 3px 0 1px;
	border-bottom: 1px solid #eee;
	margin: 0 1px;
	background: #fff;
}
.editBar button {
	gap: 4px;
	height: 14px;
	padding: 0 6px;
	border-radius: 1px;
	background: #f0f0f0;
	font-size: 7px;
	font-weight: 500;
}
article {
	margin: 1px 4px 0;
	padding: 10px 8px 0 9px;
	border-radius: 2px 2px 0 0;
	background: #fff;
	font: 6px/8px "Open Sans", "Noto Sans", sans-serif;
	color: #666;
}
article h2 {
	margin: 0 0 4px;
	font-size: 9px;
	line-height: 10px;
	font-weight: 400;
	color: #222;
}
article p {
	margin: 0 0 8px;
	white-space: nowrap;
}
article .org {
	margin-bottom: 10px;
	line-height: 9px;
}
.description {
	padding: 2px 0 4px;
	color: #222;
}
.map {
	width: 100%;
	height: 49px;
}
.map text {
	fill: #6f7f88;
	font: 6px Roboto, sans-serif;
}
.map .street { font-size: 4px; }
.install {
	justify-content: center;
	width: 100%;
	height: 18px;
	margin-top: 8px;
	padding-top: 4px;
	border-radius: 1px 1px 0 0;
	background: #f0f0f0;
	color: #777;
	font-weight: 600;
}
.blockScroll {
	position: absolute;
	top: 23px;
	right: 1px;
	bottom: 13px;
	width: 3px;
	border-radius: 2px;
	background: #aaa;
}
.chat {
	position: absolute;
	right: 15px;
	bottom: 33px;
	justify-content: center;
	width: 25px;
	height: 25px;
	border-radius: 50%;
	background: #2ea5db;
}
.chat svg {
	width: 13px;
	height: 11px;
}
```
FILE: script.js
```js
var envoye = ['blue', '1er mail envoyé'];
var mail = ['salmon', '1er mail'];
var fermeture = ['salmon', 'Fermeture 4 ...'];

var records = [
	{ nom: 'La Maison de Karim', mark: true, contact: [['teal', 'A appeler']], valid: true, diffusion: 'Sensib bénéficiaire La Mais' },
	{ nom: "L'Etape Ivryenne", contact: [['lime', 'Formulaire validé'], ['orange', '1er ma']], impact: ['sky', 'Toujours ouve...'], valid: true, diffusion: "Sensib pro L'Etape Ivryenn" },
	{ nom: 'Boutique Solidarité', open: true, contact: [envoye], valid: true, diffusion: 'Sensib pro Boutique Solida' },
	{ nom: 'Espace Solidarité Familles', info: ['paleGreen', 'né'] },
	{ nom: 'Association Joly', mark: true, contact: [envoye, mail], valid: true },
	{ nom: 'La Halte Fontenaysienne', open: true, current: true, contact: [envoye], valid: true },
	{ nom: "Maison du Rond d'Or", contact: [envoye] },
	{ nom: 'Action Générale Catholique des Femmes', mark: true, info: ['paleBlue', 'n'] },
	{ nom: 'ALIZEP' },
	{ nom: "Actions de Solidarité pour l'Insertion e...", contact: [envoye, mail], valid: true },
	{ nom: 'Association Citoyenneté, entraide solid...', mark: true },
	{ nom: "Permanence d'accès au droit des étra...", impact: fermeture },
	{ nom: "Permanence d'accès au droit des étra...", contact: [['pink', 'Formulaire ouvert'], ['kelly', '1er ma']], impact: fermeture, valid: true },
	{ nom: 'Association des familles de Charenton', contact: [['orange', '1er mail cliqué']] },
	{ nom: 'Association du quartier de la Gare', impact: fermeture },
	{ nom: 'Epicéa', info: ['paleGreen', 'né'] },
	{ nom: 'Association Fontenay pour la diversité', mark: true, contact: [envoye] },
	{ nom: 'Comité Arcueil Association IFAFE', contact: [envoye, mail], valid: true },
	{ nom: 'Association La Compagnie des parents', mark: true, contact: [['salmon', '1er mail lu']], valid: true },
	{ nom: 'Epicerie sociale Le Coup de Pouce', mark: true, contact: [envoye, mail] }
];

function getTag(tag){
	return `<span class="tag ${tag[0]}">${tag[1]}</span>`;
}

// first cell: row number, or tick box and expand icon
function getNumber(record, index){
	if(record.open){
		return `<input type="checkbox" aria-label="${record.nom}"><svg class="s5"><use href="#i-expand"/></svg>`;
	}
	return `<span>${index + 1}</span>${record.mark ? '<i></i>' : ''}`;
}

function getRow(record, index){
	var info = record.info ? `<span class="cut wide ${record.info[0]}">${record.info[1]}</span>` : '<span class="cut"></span>';
	return `<tr class="${record.current ? 'current' : ''}">
		<td class="num"><div>${getNumber(record, index)}</div></td>
		<td class="frozen"><div>${record.nom}</div></td>
		<td class="info"><div>${info}</div></td>
		<td><div>${(record.contact || []).map(getTag).join('')}</div></td>
		<td class="impact"><div>${record.impact ? getTag(record.impact) : ''}</div></td>
		<td class="valid">${record.valid ? '<svg class="s6"><use href="#i-check"/></svg>' : ''}</td>
		<td><div>${record.diffusion ? `<span class="link">${record.diffusion}</span>` : ''}</div></td>
		<td></td>
	</tr>`;
}

document.querySelector('.grid tbody').innerHTML = records.map(getRow).join('');
```
